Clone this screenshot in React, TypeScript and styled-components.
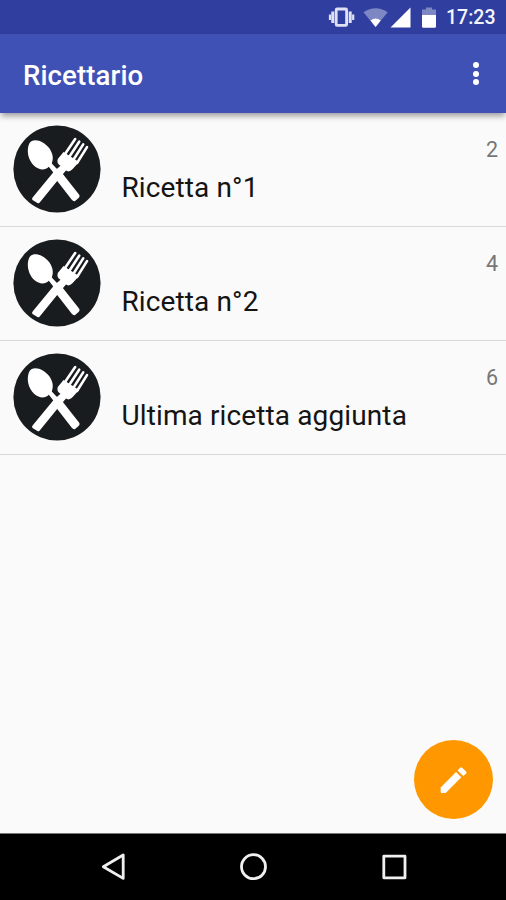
import React from "react";
import styled, { createGlobalStyle } from "styled-components";

const GlobalStyle = createGlobalStyle`
  * { box-sizing: border-box; }
  body { margin: 0; font-family: Roboto, sans-serif; background: #fafafa; }
`;

const Screen = styled.div`
  display: flex;
  flex-direction: column;
  width: 506px;
  height: 900px;
  background: #fafafa;
  overflow: hidden;
`;

const StatusBar = styled.header`
  display: flex;
  flex: none;
  align-items: center;
  justify-content: flex-end;
  height: 34px;
  padding-right: 11px;
  background: #303f9f;
  color: #f4f5fb;
`;

const StatusIcons = styled.svg`
  width: 110px;
  height: 34px;
  margin-right: 8px;
`;

const Clock = styled.time`
  width: 49px;
  font-size: 19.5px;
  line-height: 34px;
  font-weight: 500;
  padding-top: 2px;
  white-space: nowrap;
`;

const AppBar = styled.div`
  display: flex;
  flex: none;
  align-items: center;
  justify-content: space-between;
  height: 79px;
  padding: 0 24px 0 23px;
  background: #3f51b5;
  color: #fff;
  box-shadow: 0 4px 6px -1px rgba(0, 0, 0, 0.38);
  z-index: 1;
`;

const Title = styled.h1`
  margin: 4px 0 0;
  font-size: 27.6px;
  line-height: 32px;
  font-weight: 500;
  letter-spacing: 0.1px;
`;

const MenuButton = styled.button`
  display: flex;
  flex-direction: column;
  gap: 2.4px;
  padding: 0;
  margin-right: 3px;
  border: 0;
  background: none;
`;

const Dot = styled.span`
  width: 6px;
  height: 6px;
  border-radius: 50%;
  background: #fff;
`;

const Content = styled.main`
  display: flex;
  flex: 1;
  flex-direction: column;
  justify-content: space-between;
`;

const RecipeList = styled.ul`
  margin: 0;
  padding: 0;
  list-style: none;
`;

const RecipeRow = styled.li`
  display: flex;
  height: 114px;
  padding: 12px 8px 0 13px;
  border-bottom: 1px solid #d9d9d9;
`;

const Avatar = styled.svg`
  flex: none;
  width: 88px;
  height: 88px;
`;

const RecipeName = styled.span`
  flex: 1;
  margin: 46px 0 0 20.5px;
  color: #141414;
  font-size: 28px;
  line-height: 34px;
  letter-spacing: 0.12px;
`;

const Servings = styled.span`
  margin-top: 12px;
  color: #777;
  font-size: 21.5px;
  line-height: 26px;
`;

const AddButton = styled.button`
  display: flex;
  align-items: center;
  justify-content: center;
  align-self: flex-end;
  width: 79px;
  height: 79px;
  margin: 0 13px 14px 0;
  padding: 0;
  border: 0;
  border-radius: 50%;
  background: #ff9800;
`;

const NavBar = styled.nav`
  display: flex;
  flex: none;
  justify-content: center;
  height: 67px;
  background: #000;
  border-top: 1px solid #777;
`;

function Cutlery() {
  return (
    <Avatar viewBox="0 0 88 88">
      <circle cx="44" cy="44" r="43.6" fill="#191c1e" />
      <g fill="#fff">
        <path d="M16.3 18.5C20 12 31 16 36.5 23.5C40 29 40.6 33 38.8 38.6L43.5 43.5L47.5 46L66 69.5Q67.5 71.5 65 73.4L61.8 76.2Q60.2 76.6 58.8 74.8L41.3 52.3L40.5 47.7L35.8 41.8C32 45.6 26.5 45.4 21.3 41C14.8 35 13.3 25 16.3 18.5Z" />
        <path d="M44.8 34L50.5 27L66 37L59.7 44Q56.2 47.8 53 45.6L47 52.6L26.5 77.7Q25.2 79 23.6 77.6L19.5 75Q18.4 74 19.8 72.3L41 46.5L47.5 40.8Q43.3 38.5 44.8 34Z" />
      </g>
      <g stroke="#fff" strokeWidth="2.6" strokeLinecap="round">
        <path d="M51.7 29.5L62.2 14M55.7 32.8L66.2 16.7M59.8 35.7L70.2 19.4M64 38L74 22.1" />
      </g>
    </Avatar>
  );
}

const recipes = [
  { name: "Ricetta n°1", servings: 2 },
  { name: "Ricetta n°2", servings: 4 },
  { name: "Ultima ricetta aggiunta", servings: 6 },
];

export default function App() {
  return (
    <Screen>
      <GlobalStyle />
      <StatusBar>
        <StatusIcons viewBox="328 0 110 34">
          <g stroke="#dfe2f5" fill="none">
            <rect x="336.2" y="9" width="10.4" height="16.4" rx="1" strokeWidth="2.8" />
            <path d="M332.8 11.5v11.5M350.2 11.5v11.5" strokeWidth="3" />
            <path d="M330 14.5v5.5M353.2 14.5v5.5" strokeWidth="2.2" />
          </g>
          <path d="M363.5 12.3Q375.6 4 387.7 12.3L375.6 27Z" fill="#7d87c4" />
          <path d="M370.5 20.5Q375.6 16.7 380.7 20.5L375.6 27Z" fill="#fff" />
          <path d="M390.5 27.5L410.5 7.5V27.5Z" fill="#fff" />
          <path d="M422 15V9.5h4V7.5h6v2h4V15Z" fill="#7d87c4" />
          <path d="M422 15h14v11.5q0 1.3-1.3 1.3h-11.4q-1.3 0-1.3-1.3Z" fill="#fff" />
        </StatusIcons>
        <Clock>17:23</Clock>
      </StatusBar>
      <AppBar>
        <Title>Ricettario</Title>
        <MenuButton aria-label="Menu">
          <Dot />
          <Dot />
          <Dot />
        </MenuButton>
      </AppBar>
      <Content>
        <RecipeList>
          {recipes.map((recipe) => (
            <RecipeRow key={recipe.name}>
              <Cutlery />
              <RecipeName>{recipe.name}</RecipeName>
              <Servings>{recipe.servings}</Servings>
            </RecipeRow>
          ))}
        </RecipeList>
        <AddButton aria-label="Aggiungi ricetta">
          <svg width="34" height="34" viewBox="0 0 34 34" fill="#fff">
            <path d="M3.7 24.6L19 8.9L24.3 14.2L8.7 30H4.7Q3.7 30 3.7 29Z" />
            <path d="M20.6 7.4L23.2 4.8Q24.3 3.9 25.4 4.9L29 8.6Q30 9.7 29 10.7L26.2 13Z" />
          </svg>
        </AddButton>
      </Content>
      <NavBar>
        <svg width="506" height="66" viewBox="0 834 506 66" fill="none" stroke="#f0f0f0" strokeWidth="2.8" strokeLinejoin="round">
          <path d="M103.3 866.7L123.2 855V878.4Z" />
          <circle cx="253.5" cy="866.7" r="12" />
          <rect x="383.8" y="856.2" width="21.2" height="21.6" />
        </svg>
      </NavBar>
    </Screen>
  );
}
